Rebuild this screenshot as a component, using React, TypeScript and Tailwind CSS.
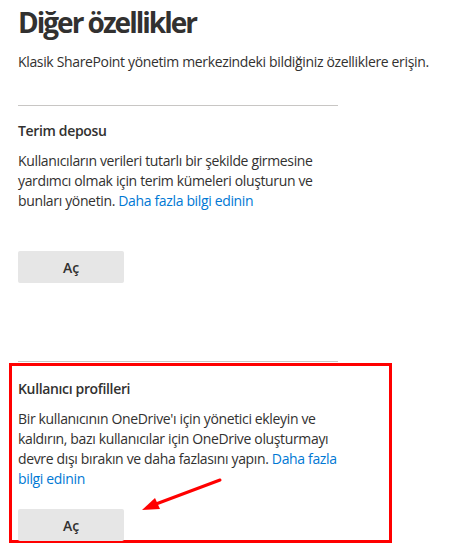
import React from "react";

const font = { fontFamily: '"Open Sans", "Noto Sans", sans-serif' };

function Section({ title, children }: { title: string; children: React.ReactNode }) {
  return (
    <div>
      <div className="text-[14px] leading-[20px] font-semibold tracking-[-0.35px] text-[#323130]">{title}</div>
      <p className="mt-[10px] text-[14px] leading-[20px] tracking-[-0.35px] text-[#323130]">{children}</p>
    </div>
  );
}

function Btn() {
  return (
    <button className="w-[106px] h-[32px] rounded-[2px] bg-[#e6e6e6] text-[14px] font-semibold text-[#323130]">
      Aç
    </button>
  );
}

export default function App() {
  return (
    <div className="relative w-[466px] h-[549px] bg-white overflow-hidden" style={font}>
      <div className="pl-[18px] pt-[4px]">
        <h1 className="text-[28px] leading-[36px] font-bold tracking-[-2px] text-[#323130]">Diğer özellikler</h1>
        <p className="mt-[12px] text-[14px] leading-[20px] tracking-[-0.35px] text-[#323130]">
          Klasik SharePoint yönetim merkezindeki bildiğiniz özelliklere erişin.
        </p>
        <div className="mt-[33px] w-[320px] h-px bg-[#c8c6c4]" />
        <div className="mt-[15px] w-[370px]">
          <Section title="Terim deposu">
            Kullanıcıların verileri tutarlı bir şekilde girmesine
            <br />
            yardımcı olmak için terim kümeleri oluşturun ve
            <br />
            bunları yönetin. <span className="text-[#0078d4]">Daha fazla bilgi edinin</span>
          </Section>
          <div className="mt-[40px]">
            <Btn />
          </div>
        </div>
        <div className="mt-[78px] w-[320px] h-px bg-[#c8c6c4]" />
      </div>
      <div className="ml-[9px] mt-[1px] w-[383px] h-[180px] border-[3px] border-[#ff0000] pl-[6px] pt-[13px]">
        <div className="w-[360px]">
          <Section title="Kullanıcı profilleri">
            Bir kullanıcının OneDrive'ı için yönetici ekleyin ve
            <br />
            kaldırın, bazı kullanıcılar için OneDrive oluşturmayı
            <br />
            devre dışı bırakın ve daha fazlasını yapın. <span className="text-[#0078d4]">Daha fazla</span>
            <br />
            <span className="text-[#0078d4]">bilgi edinin</span>
          </Section>
          <div className="mt-[20px]">
            <Btn />
          </div>
        </div>
      </div>
      <svg className="absolute left-0 top-0 pointer-events-none" width="466" height="549">
        <line x1="220" y1="480" x2="156" y2="504" stroke="#ff0000" strokeWidth="3" strokeLinecap="round" />
        <polygon points="142,510 155,498 160,509" fill="#ff0000" />
      </svg>
    </div>
  );
}
